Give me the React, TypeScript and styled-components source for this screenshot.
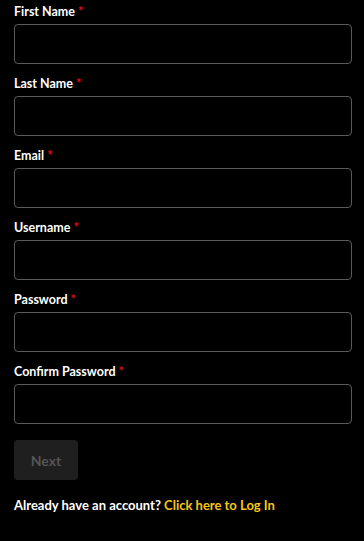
import React from "react";
import styled, { createGlobalStyle } from "styled-components";

const GlobalStyle = createGlobalStyle`
  html, body {
    margin: 0;
    padding: 0;
    background: #000;
  }
  * {
    box-sizing: border-box;
  }
`;

const Form = styled.form`
  display: flex;
  flex-direction: column;
  gap: 11px;
  padding: 3px 12px 40px 14px;
  background: #000;
  min-height: 541px;
  font-family: Lato, "Liberation Sans", sans-serif;
`;

const Field = styled.div`
  display: flex;
  flex-direction: column;
`;

const Label = styled.label`
  display: block;
  height: 16px;
  line-height: 16px;
  margin-bottom: 5px;
  font-size: 12.5px;
  font-weight: 700;
  color: #fff;
`;

const Required = styled.span`
  color: #e50914;
  margin-left: 3px;
  font-size: 13px;
`;

const Input = styled.input`
  width: 100%;
  height: 40px;
  background: #000;
  border: 1px solid #5a5a5a;
  border-radius: 4px;
  color: #fff;
  font-size: 14px;
  padding: 0 10px;
  outline: none;
`;

const NextButton = styled.button`
  margin-top: 5px;
  width: 64px;
  height: 40px;
  border: none;
  border-radius: 4px;
  background: #1f1f1f;
  color: #555;
  font-family: inherit;
  font-size: 14px;
  font-weight: 700;
  cursor: not-allowed;
`;

const Footer = styled.p`
  margin: 6px 0 0;
  line-height: 16px;
  font-size: 13px;
  font-weight: 700;
  color: #fff;
`;

const LoginLink = styled.a`
  color: #f5c518;
  text-decoration: none;
`;

const fields: { label: string; type: string }[] = [
  { label: "First Name", type: "text" },
  { label: "Last Name", type: "text" },
  { label: "Email", type: "email" },
  { label: "Username", type: "text" },
  { label: "Password", type: "password" },
  { label: "Confirm Password", type: "password" },
];

export default function App() {
  return (
    <>
      <GlobalStyle />
      <Form onSubmit={(e) => e.preventDefault()}>
        {fields.map((f) => (
          <Field key={f.label}>
            <Label>
              {f.label}
              <Required>*</Required>
            </Label>
            <Input type={f.type} />
          </Field>
        ))}
        <NextButton type="submit" disabled>
          Next
        </NextButton>
        <Footer>
          Already have an account? <LoginLink href="#">Click here to Log In</LoginLink>
        </Footer>
      </Form>
    </>
  );
}
